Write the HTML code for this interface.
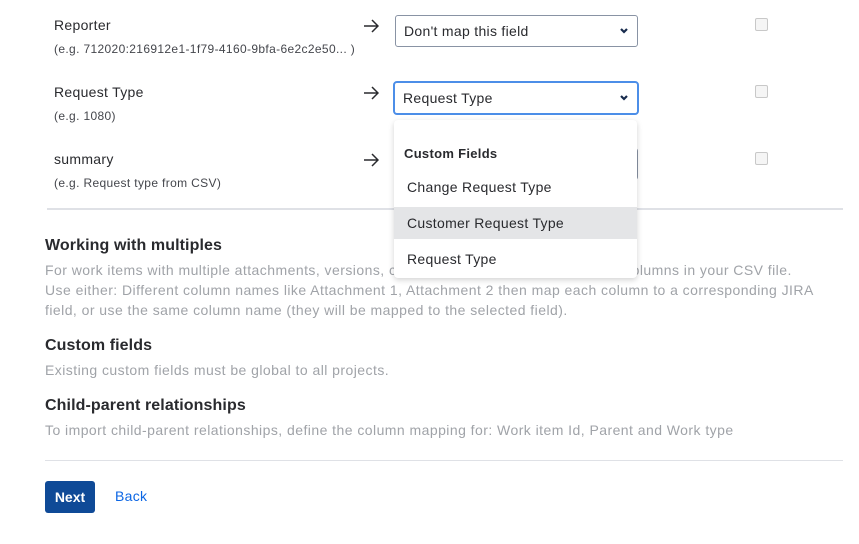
<!DOCTYPE html>
<html><head><style>
*{margin:0;padding:0;box-sizing:border-box}
body{width:859px;height:544px;background:#fff;font-family:"Liberation Sans",sans-serif;position:relative;overflow:hidden;color:#172b4d}
.a{position:absolute;white-space:nowrap}
.lbl{font-size:14px;color:#292a2e;letter-spacing:0.3px}
.ex{font-size:12px;color:#44464c;letter-spacing:0.35px}
.sel{position:absolute;left:395px;width:243px;height:32px;border:1px solid #8993a4;border-radius:3px;background:#fff;font-size:14px;padding:7px 8px;color:#292a2e}
.chev{position:absolute;right:8px;top:11px}
.cb{position:absolute;left:755px;width:13px;height:13px;border:1px solid #c8c8c8;border-radius:2px;background:#f5f5f5}
h3{position:absolute;font-size:16px;font-weight:bold;color:#292a2e;white-space:nowrap}
.p{position:absolute;font-size:14px;color:#a0a3a8;line-height:20px;white-space:nowrap;letter-spacing:0.45px}
.dd{font-size:14px;color:#292a2e;letter-spacing:0.3px}
</style></head><body>
<div class="a lbl" style="left:54px;top:17px">Reporter</div>
<div class="a ex" style="left:54px;top:42px">(e.g. 712020:216912e1-1f79-4160-9bfa-6e2c2e50... )</div>
<div class="a lbl" style="left:54px;top:84px">Request Type</div>
<div class="a ex" style="left:54px;top:109px">(e.g. 1080)</div>
<div class="a lbl" style="left:54px;top:151px">summary</div>
<div class="a ex" style="left:54px;top:176px">(e.g. Request type from CSV)</div>
<svg class="a" style="left:363px;top:19px" width="16" height="14" viewBox="0 0 16 14"><path d="M1 7h14M9 1l6 6-6 6" stroke="#292a2e" stroke-width="1.5" fill="none"/></svg>
<svg class="a" style="left:363px;top:86px" width="16" height="14" viewBox="0 0 16 14"><path d="M1 7h14M9 1l6 6-6 6" stroke="#292a2e" stroke-width="1.5" fill="none"/></svg>
<svg class="a" style="left:363px;top:153px" width="16" height="14" viewBox="0 0 16 14"><path d="M1 7h14M9 1l6 6-6 6" stroke="#292a2e" stroke-width="1.5" fill="none"/></svg>
<div class="sel dd" style="top:15px">Don't map this field<svg class="chev" width="10" height="8" viewBox="0 0 10 8"><path d="M2 2l3 3 3-3" stroke="#172b4d" stroke-width="2.2" fill="none"/></svg></div>
<div class="sel dd" style="top:81px;left:393px;width:246px;height:34px;border:2px solid #4c8ee8;border-radius:4px">Request Type<svg class="chev" width="10" height="8" viewBox="0 0 10 8"><path d="M2 2l3 3 3-3" stroke="#172b4d" stroke-width="2.2" fill="none"/></svg></div>
<div class="sel" style="top:148px"></div>
<div class="cb" style="top:18px"></div>
<div class="cb" style="top:85px"></div>
<div class="cb" style="top:152px"></div>
<div class="a" style="left:47px;top:208px;width:796px;height:2px;background:#dfe1e6"></div>
<h3 style="left:45px;top:237px;letter-spacing:0.1px">Working with multiples</h3>
<div class="p" style="left:45px;top:260px">For work items with multiple attachments, versions, components or labels, use multiple columns in your CSV file.<br>Use either: Different column names like Attachment 1, Attachment 2 then map each column to a corresponding JIRA<br>field, or use the same column name (they will be mapped to the selected field).</div>
<h3 style="left:45px;top:337px;letter-spacing:0.1px">Custom fields</h3>
<div class="p" style="left:45px;top:360px">Existing custom fields must be global to all projects.</div>
<h3 style="left:45px;top:397px;letter-spacing:0.1px">Child-parent relationships</h3>
<div class="p" style="left:45px;top:420px">To import child-parent relationships, define the column mapping for: Work item Id, Parent and Work type</div>
<div class="a" style="left:45px;top:460px;width:798px;height:1px;background:#dfe1e6"></div>
<div class="a" style="left:45px;top:481px;width:50px;height:32px;background:#0f4a97;border-radius:3px;color:#fff;font-size:14px;font-weight:bold;text-align:center;line-height:32px">Next</div>
<div class="a" style="left:115px;top:488px;font-size:14px;color:#0c66e4;letter-spacing:0.3px">Back</div>
<div class="a" style="left:394px;top:120px;width:243px;height:158px;background:#fff;border-radius:4px;box-shadow:0 2px 6px rgba(0,0,0,.18);z-index:5">
<div class="a" style="left:10px;top:26px;font-size:13px;font-weight:bold;color:#292a2e;letter-spacing:0.3px">Custom Fields</div>
<div class="a dd" style="left:13px;top:59px">Change Request Type</div>
<div class="a" style="left:0;top:87px;width:243px;height:32px;background:#e4e5e7"></div>
<div class="a dd" style="left:13px;top:95px">Customer Request Type</div>
<div class="a dd" style="left:13px;top:131px">Request Type</div>
</div>
</body></html>
